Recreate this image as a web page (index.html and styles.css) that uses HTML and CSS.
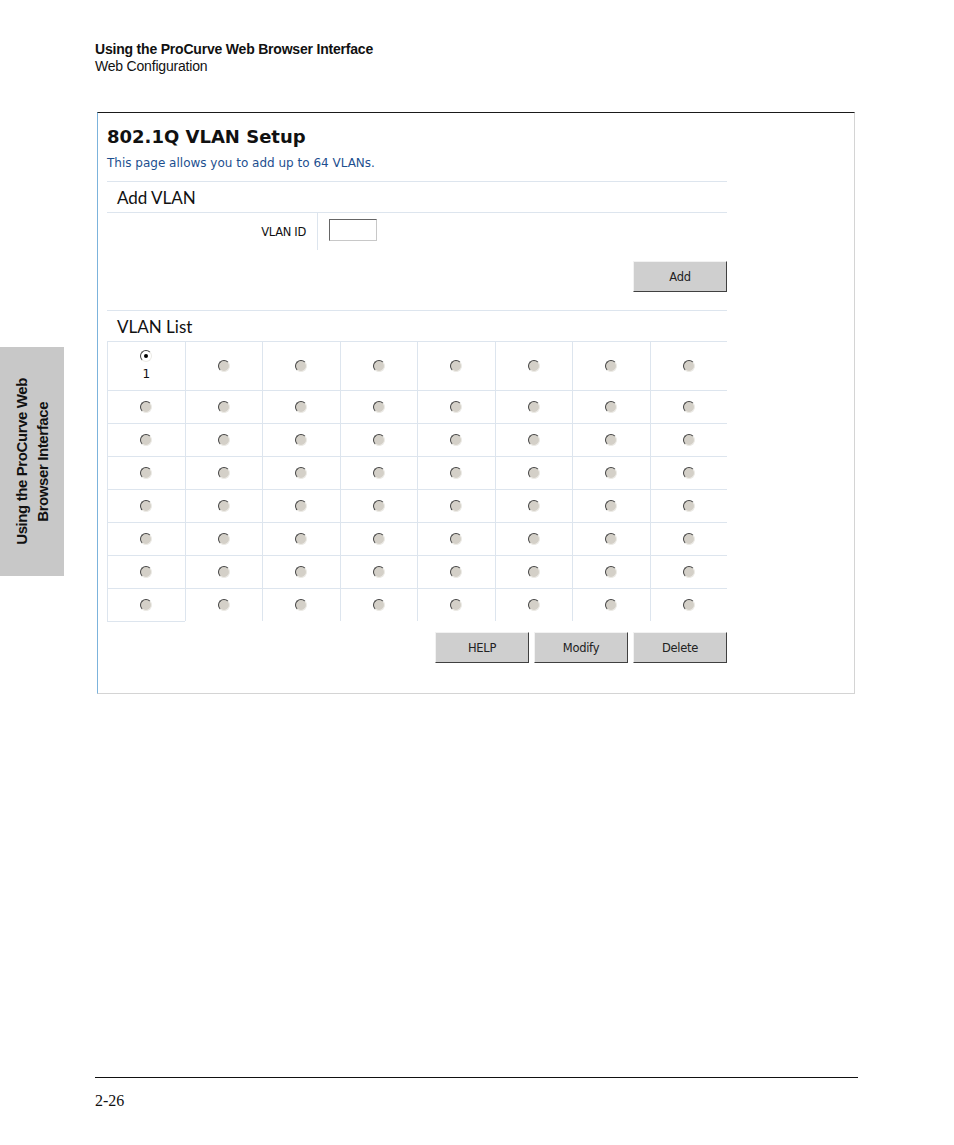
FILE: index.html
```html
<!DOCTYPE html>
<html>
<head>
<meta charset="utf-8">
<link rel="stylesheet" href="styles.css">
</head>
<body>
<div class="page">
  <aside class="tab"><div class="tab-text">Using the ProCurve Web<br>Browser Interface</div></aside>
  <main class="main">
    <header class="running">
      <div class="run-title">Using the ProCurve Web Browser Interface</div>
      <div class="run-sub">Web Configuration</div>
    </header>
    <section class="shot">
      <div class="content">
        <h1 class="title">802.1Q VLAN Setup</h1>
        <p class="desc">This page allows you to add up to 64 VLANs.</p>
        <div class="sec-head">Add VLAN</div>
        <div class="form-row">
          <div class="label-cell">VLAN ID</div>
          <div class="input-cell"><span class="textbox"></span></div>
        </div>
        <div class="btn-row add-row"><span class="btn">Add</span></div>
        <div class="sec-head">VLAN List</div>
        <div class="grid" id="grid"></div>
        <div class="btn-row actions">
          <span class="btn">HELP</span>
          <span class="btn">Modify</span>
          <span class="btn">Delete</span>
        </div>
      </div>
    </section>
    <footer class="foot">2-26</footer>
  </main>
</div>
<script src="script.js"></script>
</body>
</html>
```
FILE: script.js
```js
var g = document.getElementById('grid');
for (var r = 0; r < 8; r++) {
  for (var c = 0; c < 8; c++) {
    var cell = document.createElement('div');
    cell.className = 'cell' + (r === 0 ? ' first-row' : '') + (r === 7 && c === 0 ? ' last-first' : '');
    var radio = document.createElement('span');
    radio.className = 'radio' + (r === 0 && c === 0 ? ' on' : '');
    cell.appendChild(radio);
    if (r === 0 && c === 0) {
      var n = document.createElement('span');
      n.className = 'num';
      n.textContent = '1';
      cell.appendChild(n);
    }
    g.appendChild(cell);
  }
}
```
FILE: styles.css
```css
html, body { margin: 0; padding: 0; background: #fff; }
.page { display: flex; width: 954px; height: 1145px; }
.tab {
  width: 64px; height: 229px; margin-top: 347px; background: #c8c8c8;
  display: flex; align-items: center; justify-content: center; flex: none;
}
.tab-text {
  writing-mode: vertical-rl; transform: rotate(180deg);
  font-family: "Liberation Sans", Arial, sans-serif; font-weight: bold;
  font-size: 15px; line-height: 21px; text-align: center; color: #111;
  letter-spacing: -0.4px;
}
.main { margin-left: 31px; width: 763px; display: flex; flex-direction: column; }
.running { padding-top: 41px; font-family: "Liberation Sans", Arial, sans-serif; color: #111; }
.run-title { font-weight: bold; font-size: 14px; line-height: 17px; letter-spacing: -0.2px; }
.run-sub { font-size: 14px; line-height: 17px; letter-spacing: -0.2px; }
.shot {
  margin-top: 37px; margin-left: 2px; width: 756px; height: 580px;
  border-top: 1px solid #1a1a1a; border-left: 1px solid #7cb3dc;
  border-right: 1px solid #d4d4d4; border-bottom: 1px solid #d4d4d4;
}
.content { margin-left: 9px; width: 620px; font-family: "DejaVu Sans", Verdana, sans-serif; }
.title { margin: 0; padding-top: 12px; font-size: 18px; line-height: 24px; font-weight: bold; color: #111; }
.desc { margin: 6px 0 0; font-size: 12px; line-height: 16px; color: #1d4f8f; height: 26px; }
.sec-head {
  border-top: 1px solid #dde5ee; height: 30px; padding-left: 10px;
  font-family: Lato, "DejaVu Sans", sans-serif; font-size: 17px; line-height: 31px; color: #111;
}
.form-row { display: flex; border-top: 1px solid #dde5ee; height: 37px; }
.label-cell {
  width: 199px; padding-right: 11px; border-right: 1px solid #dde5ee; text-align: right;
  font-size: 11.5px; line-height: 38px; color: #111; letter-spacing: -0.3px;
}
.input-cell { padding: 6px 0 0 11px; }
.textbox {
  display: block; width: 46px; height: 20px; background: #fff;
  border: 1px solid #c8c8c8; border-top-color: #666; border-left-color: #666;
}
.btn-row { display: flex; justify-content: flex-end; gap: 5px; }
.add-row { height: 60px; padding-top: 11px; box-sizing: border-box; }
.btn {
  display: flex; align-items: center; justify-content: center; width: 92px; height: 29px;
  background: #cfcfcf; border: 1px solid #404040; border-top-color: #f2f2f2; border-left-color: #f2f2f2;
  font-family: "DejaVu Sans", Tahoma, sans-serif; font-size: 11.5px; color: #222; letter-spacing: -0.3px;
}
.grid { display: grid; grid-template-columns: repeat(8, 1fr); }
.cell {
  height: 32px; border-top: 1px solid #dde5ee; border-left: 1px solid #dde5ee;
  display: flex; flex-direction: column; align-items: center; justify-content: center;
}
.cell.first-row { height: 48px; }
.cell.last-first { border-bottom: 1px solid #dde5ee; }
.radio {
  width: 10px; height: 10px; border-radius: 50%; background: #d4d0c8; box-sizing: content-box;
  border: 1px solid #ecebe6; border-top-color: #444; border-left-color: #444;
  position: relative;
}
.radio.on { background: #fff; margin-top: -2px; }
.radio.on::after {
  content: ""; position: absolute; left: 3px; top: 3px; width: 4px; height: 4px; border-radius: 50%; background: #000;
}
.num { font-size: 12px; line-height: 14px; margin-top: 5px; color: #111; }
.actions { margin-top: 10px; }
.foot {
  margin-top: auto; height: 68px; border-top: 1px solid #111; box-sizing: border-box;
  font-family: "Liberation Serif", "Times New Roman", serif; font-size: 16px; padding-top: 14px; color: #111;
}
```
